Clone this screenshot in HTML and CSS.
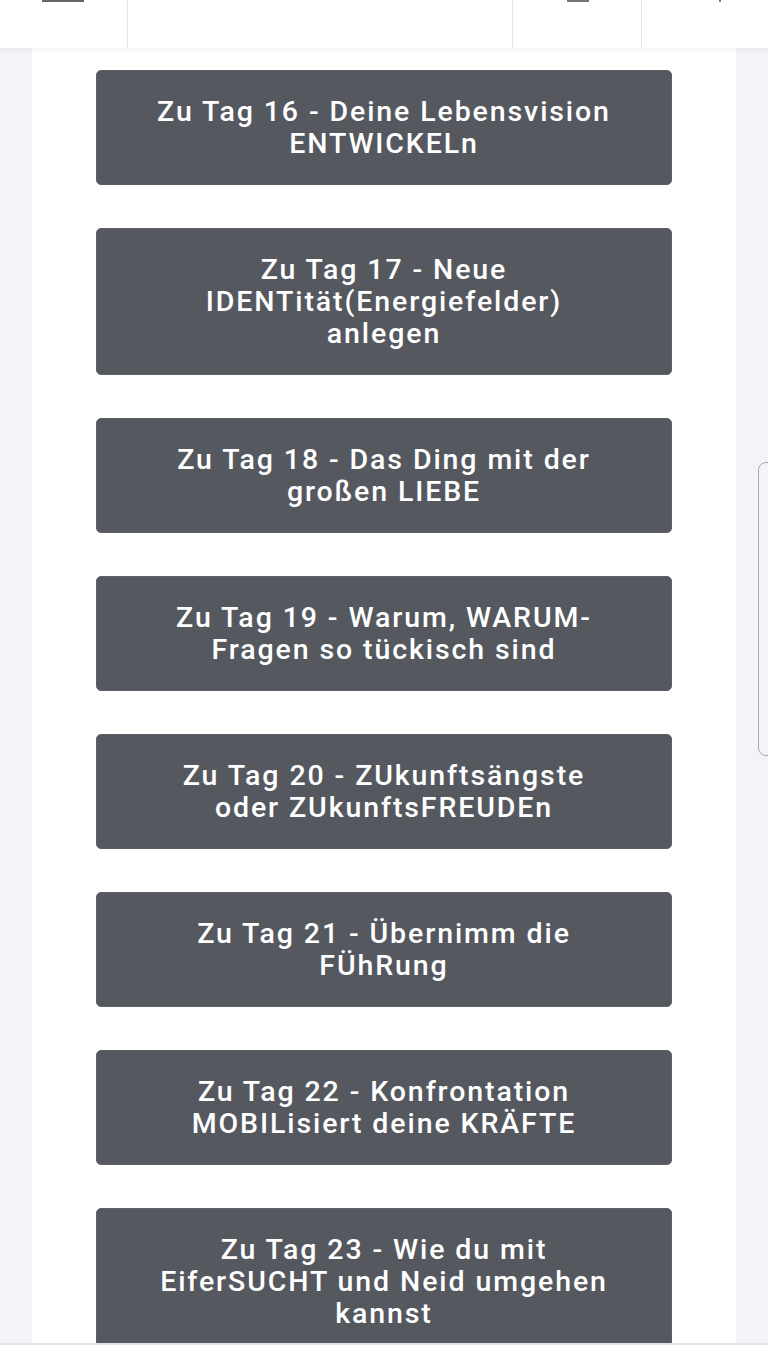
FILE: index.html
```html
<!DOCTYPE html>
<html lang="de">
<head>
  <meta charset="UTF-8" />
  <meta name="viewport" content="width=device-width, initial-scale=1.0" />
  <title>Tage</title>
  <link rel="stylesheet" href="styles.css">
</head>
<body>
  <div class="topbar">
    <div class="cell cell-menu"><span class="bar"></span></div>
    <div class="cell cell-title"></div>
    <div class="cell cell-icon"><span class="stub"></span></div>
    <div class="cell cell-last"><span class="dot"></span></div>
  </div>
  <div class="main">
    <div class="content">
      <a class="day-btn" href="#">Zu Tag 16 - Deine Lebensvision ENTWICKELn</a>
      <a class="day-btn" href="#">Zu Tag 17 - Neue IDENTität(Energiefelder) anlegen</a>
      <a class="day-btn" href="#">Zu Tag 18 - Das Ding mit der großen LIEBE</a>
      <a class="day-btn" href="#">Zu Tag 19 - Warum, WARUM-Fragen so tückisch sind</a>
      <a class="day-btn" href="#">Zu Tag 20 - ZUkunftsängste oder ZUkunftsFREUDEn</a>
      <a class="day-btn" href="#">Zu Tag 21 - Übernimm die FÜhRung</a>
      <a class="day-btn" href="#">Zu Tag 22 - Konfrontation MOBILisiert deine KRÄFTE</a>
      <a class="day-btn" href="#">Zu Tag 23 - Wie du mit EiferSUCHT und Neid umgehen kannst</a>
    </div>
    <div class="pull-tab"></div>
  </div>
  <div class="bottombar"></div>
</body>
</html>
```

FILE: styles.css
```css
html, body {
  margin: 0;
  padding: 0;
}
body {
  font-family: Roboto, "Noto Sans", Arial, sans-serif;
  background-color: #f3f4f8;
  height: 1365px;
  overflow: hidden;
  display: flex;
  flex-direction: column;
}
.topbar {
  height: 48px;
  flex: none;
  display: flex;
  background: #fff;
  box-shadow: 0 2px 6px rgba(0,0,0,0.06);
  position: relative;
  z-index: 2;
}
.cell {
  position: relative;
  border-right: 1px solid #e6e6e6;
}
.cell-menu { width: 127px; }
.cell-title { width: 384px; }
.cell-icon { width: 128px; }
.cell-last { flex: 1; border-right: none; }
.bar {
  position: absolute;
  top: 0;
  left: 42px;
  width: 42px;
  height: 2px;
  background: #666;
}
.stub {
  position: absolute;
  top: 0;
  left: 54px;
  width: 22px;
  height: 2px;
  background: #777;
}
.dot {
  position: absolute;
  top: 0;
  left: 77px;
  width: 2px;
  height: 2px;
  background: #777;
}
.main {
  flex: 1;
  overflow: hidden;
  position: relative;
}
.content {
  margin: 0 32px;
  background: #fff;
  min-height: 100%;
  padding: 22px 64px 0;
  display: flex;
  flex-direction: column;
  gap: 43px;
}
.day-btn {
  display: block;
  background-color: #55595f;
  border: 1px solid #5d6167;
  border-radius: 5px;
  color: #fff;
  text-decoration: none;
  text-align: center;
  font-size: 28.5px;
  font-weight: 500;
  letter-spacing: 1.9px;
  line-height: 32px;
  padding: 24.5px 52px;
}
.pull-tab {
  position: absolute;
  top: 414px;
  left: 758px;
  width: 30px;
  height: 292px;
  border: 1.5px solid #aaa;
  border-radius: 8px;
  background: #f3f4f8;
}
.bottombar {
  height: 20px;
  flex: none;
  background: #fff;
  border-top: 2px solid #e4e4e6;
}
```
